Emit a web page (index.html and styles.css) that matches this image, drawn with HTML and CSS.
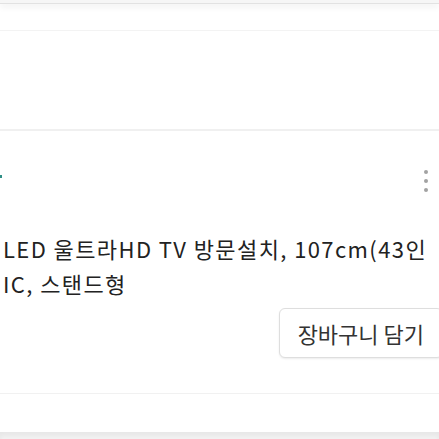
FILE: index.html
```
<!DOCTYPE html>
<html>
  <head>
    <link rel="stylesheet" href="styles.css">
  </head>

  <body>

    <div class="topbar"></div>
    <div class="strip"></div>
    <div class="blank"></div>

    <div class="card">
      <div class="card-head">
        <span class="logo-edge"></span>
        <div class="kebab">
          <span class="dot"></span>
          <span class="dot"></span>
          <span class="dot"></span>
        </div>
      </div>
      <div class="title">
        <div class="title-line">LED 울트라HD TV 방문설치, 107cm(43인</div>
        <div class="title-line">IC, 스탠드형</div>
      </div>
      <div class="row right">
        <button class="cart-button">장바구니 담기</button>
      </div>
    </div>

    <div class="after"></div>
    <div class="bottom"></div>

  </body>

</html>
```

FILE: styles.css
```
html, body {
  margin: 0;
  height: 100%;
  overflow: hidden;
  background: #ffffff;
}

body {
  font-family: "Noto Sans CJK KR", sans-serif;
  color: #222222;
}

.topbar {
  height: 3px;
  background: #f6f6f6;
  border-bottom: 1px solid #e2e2e2;
  box-shadow: 0 3px 6px rgba(0, 0, 0, 0.07);
}

.strip {
  height: 26px;
  border-bottom: 1px solid #f3f3f3;
}

.blank {
  height: 98px;
  border-bottom: 2px solid #f0f0f0;
}

.card {
  width: 443px;
  border-bottom: 1px solid #f1f1f1;
}

.card-head {
  height: 100px;
  display: flex;
  justify-content: space-between;
  align-items: center;
}

.logo-edge {
  width: 2px;
  height: 3px;
  margin-bottom: 10px;
  background: #2f8f86;
}

.kebab {
  display: flex;
  flex-direction: column;
  gap: 5px;
  margin-right: 15px;
}

.dot {
  width: 4px;
  height: 4px;
  border-radius: 50%;
  background: #a2a2a2;
}

.title {
  padding-left: 3px;
  font-size: 22px;
  line-height: 35px;
  letter-spacing: 1.4px;
  color: #222222;
}

.title-line {
  white-space: nowrap;
}

.row {
  display: flex;
  margin: 7px 0 35px;
}

.row.right {
  justify-content: flex-end;
}

.cart-button {
  font-family: inherit;
  font-size: 22px;
  line-height: 48px;
  padding: 0 18px;
  color: #333333;
  background: #ffffff;
  border: 1px solid #dedede;
  border-radius: 6px;
  box-shadow: 0 1px 2px rgba(0, 0, 0, 0.08);
}

.after {
  height: 38px;
}

.bottom {
  height: 20px;
  background: #f3f3f3;
  box-shadow: inset 0 4px 5px rgba(0, 0, 0, 0.05);
}
```
